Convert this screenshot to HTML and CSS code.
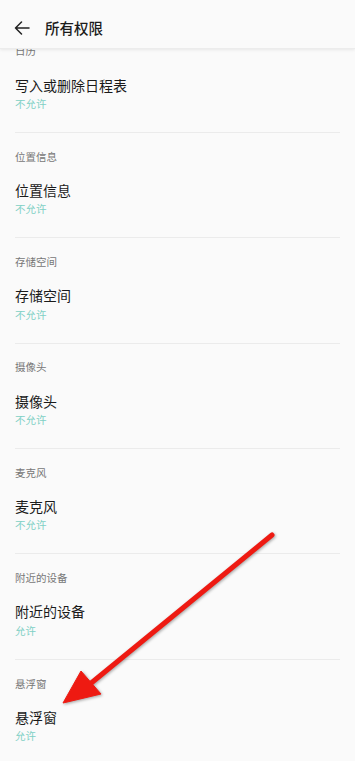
FILE: index.html
```html
<!DOCTYPE html>
<html lang="zh">
<head>
<meta charset="utf-8">
<link rel="stylesheet" href="styles.css">
</head>
<body>
<header class="topbar">
  <svg class="back" width="16" height="14" viewBox="0 0 16 14"><path d="M15 7H1.5M7.5 1L1.5 7l6 6" fill="none" stroke="#222" stroke-width="1.5" stroke-linecap="round" stroke-linejoin="round"/></svg>
  <h1 class="title">所有权限</h1>
</header>
<main class="viewport">
  <div class="list">
    <section class="group"><div class="label">日历</div><div class="name">写入或删除日程表</div><div class="state">不允许</div></section>
    <section class="group"><div class="label">位置信息</div><div class="name">位置信息</div><div class="state">不允许</div></section>
    <section class="group"><div class="label">存储空间</div><div class="name">存储空间</div><div class="state">不允许</div></section>
    <section class="group"><div class="label">摄像头</div><div class="name">摄像头</div><div class="state">不允许</div></section>
    <section class="group"><div class="label">麦克风</div><div class="name">麦克风</div><div class="state">不允许</div></section>
    <section class="group"><div class="label">附近的设备</div><div class="name">附近的设备</div><div class="state">允许</div></section>
    <section class="group"><div class="label">悬浮窗</div><div class="name">悬浮窗</div><div class="state">允许</div></section>
  </div>
</main>
<svg class="pointer" width="355" height="761" viewBox="0 0 355 761">
  <g class="pointer-g">
    <line x1="272" y1="535" x2="90" y2="684" stroke="#ee1a12" stroke-width="5" stroke-linecap="round"/>
    <polygon points="63,703 81,671 101,694" fill="#ee1a12" stroke="#ee1a12" stroke-width="1" stroke-linejoin="round"/>
  </g>
</svg>
</body>
</html>
```
FILE: styles.css
```css
html, body {
  margin: 0;
  padding: 0;
}
body {
  width: 355px;
  height: 761px;
  overflow: hidden;
  background: #fafafa;
  font-family: "Noto Sans CJK SC", "Noto Sans", sans-serif;
  position: relative;
}
.topbar {
  position: relative;
  z-index: 2;
  height: 49px;
  display: flex;
  align-items: center;
  padding-left: 14px;
  padding-top: 7px;
  box-sizing: border-box;
  background: #fafafa;
  box-shadow: 0 1px 3px rgba(0,0,0,0.08);
  border-bottom: 1px solid #ececec;
}
.back {
  display: block;
  flex: none;
}
.title {
  margin: 0 0 0 15px;
  font-size: 14.5px;
  font-weight: 500;
  color: #1c1c1c;
  line-height: 20px;
}
.viewport {
  height: 712px;
  overflow: hidden;
}
.list {
  margin-top: -22.4px;
  padding: 0 15px;
}
.group {
  border-top: 1px solid #ebebeb;
  padding: 16.7px 0 21.1px;
}
.label {
  font-size: 10.5px;
  line-height: 14px;
  color: #777;
}
.name {
  margin-top: 16.3px;
  font-size: 14px;
  line-height: 20px;
  color: #1a1a1a;
}
.state {
  margin-top: 2.3px;
  font-size: 10.5px;
  line-height: 14px;
  color: #80d0c5;
}
.pointer {
  position: absolute;
  left: 0;
  top: 0;
  z-index: 3;
  pointer-events: none;
}
.pointer-g {
  filter: drop-shadow(1.5px 1.5px 1.5px rgba(0,0,0,0.35));
}
```
